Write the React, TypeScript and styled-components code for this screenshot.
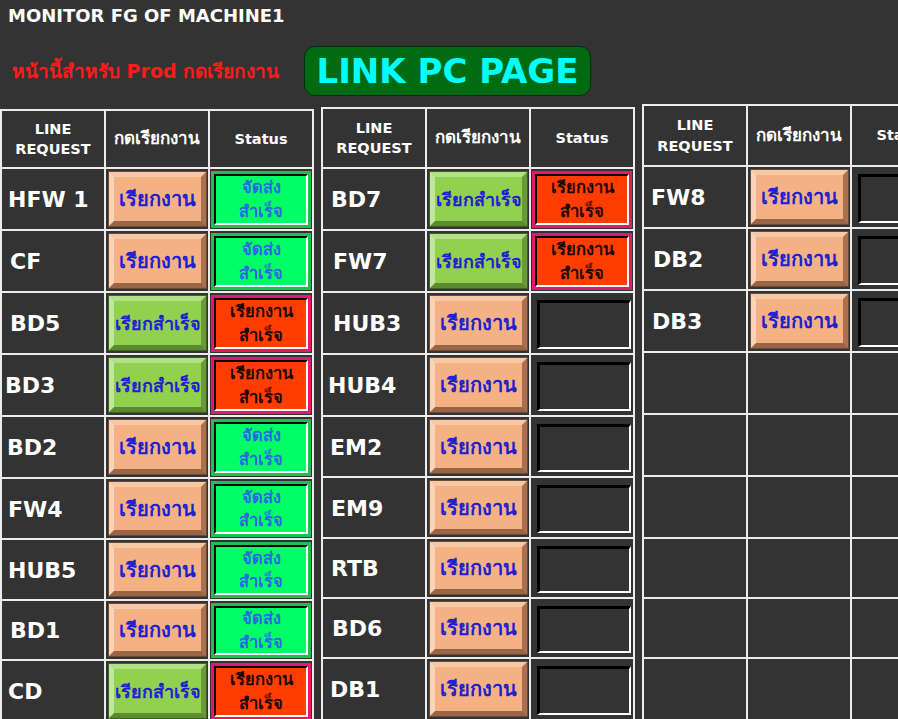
import React from "react";
import styled, { createGlobalStyle } from "styled-components";

const GlobalStyle = createGlobalStyle`
  html, body {
    margin: 0;
    padding: 0;
    background: #333333;
  }
  body {
    width: 898px;
    height: 719px;
    overflow: hidden;
    font-family: "DejaVu Sans", "Noto Sans", sans-serif;
  }
`;

type Req = "call" | "done";
type Stat = "sent" | "called" | "empty";

interface Row {
  line: string;
  indent: number;
  req?: Req;
  stat?: Stat;
}

const Page = styled.div`
  width: 898px;
  height: 719px;
  overflow: hidden;
  background: #333333;
`;

const Header = styled.header`
  height: 104px;
  display: flex;
  flex-direction: column;
`;

const Title = styled.h1`
  margin: 0;
  padding: 5px 0 0 8px;
  height: 30px;
  box-sizing: border-box;
  color: #ffffff;
  font-size: 18px;
  font-weight: bold;
`;

const NoticeRow = styled.div`
  display: flex;
  align-items: center;
  padding-left: 12px;
  margin-top: 16px;
`;

const Notice = styled.span`
  width: 292px;
  color: #ff1a1a;
  font-size: 19px;
  font-weight: bold;
`;

const LinkButton = styled.a`
  width: 285px;
  height: 48px;
  display: flex;
  align-items: center;
  justify-content: center;
  background: #006b10;
  border: 1px solid #0d2a0d;
  border-radius: 11px;
  color: #00ffff;
  font-size: 34px;
  font-weight: bold;
  text-decoration: none;
`;

const Sheets = styled.div`
  display: flex;
  align-items: flex-start;
  gap: 7px;
`;

const Sheet = styled.div<{ $top: number; $rows: string }>`
  flex: 0 0 auto;
  margin-top: ${(p) => p.$top}px;
  display: grid;
  grid-template-columns: 102px 102px 102px;
  grid-template-rows: ${(p) => p.$rows};
  grid-auto-rows: 60px;
  gap: 2px;
  padding: 2px;
  background: #ececec;
`;

const Cell = styled.div`
  background: #333333;
  min-width: 0;
  overflow: hidden;
`;

const HeadCell = styled(Cell)<{ $thai?: boolean }>`
  display: flex;
  align-items: center;
  justify-content: center;
  text-align: center;
  color: #ffffff;
  font-size: ${(p) => (p.$thai ? "17px" : "14.5px")};
  font-weight: bold;
  line-height: 1.4;
  white-space: nowrap;
`;

const LineCell = styled(Cell)<{ $indent: number }>`
  display: flex;
  align-items: center;
  padding-left: ${(p) => p.$indent}px;
  padding-top: 1px;
  color: #ffffff;
  font-size: 22px;
  font-weight: bold;
  white-space: nowrap;
`;

const ButtonCell = styled(Cell)`
  display: flex;
  padding: 2px 1px 2px 2px;
`;

const Bevel = styled.button<{ $kind: Req }>`
  flex: 1;
  margin: 0;
  padding: 0;
  display: flex;
  align-items: center;
  justify-content: center;
  box-sizing: border-box;
  font-family: inherit;
  font-weight: bold;
  color: #2020d0;
  white-space: nowrap;
  border-style: solid;
  border-width: 6px;
  outline: 1px solid ${(p) => (p.$kind === "call" ? "#6b4a33" : "#3f5f22")};
  outline-offset: -1px;
  font-size: ${(p) => (p.$kind === "call" ? "20px" : "18px")};
  background: ${(p) => (p.$kind === "call" ? "#f4b183" : "#92d050")};
  border-color: ${(p) =>
    p.$kind === "call"
      ? "#f7c8a6 #a97150 #9a6546 #f9d4b8"
      : "#b3df86 #6a9a38 #5c8a2e #c1e79c"};
`;

const StatusCell = styled(Cell)`
  display: flex;
  padding: 2px 1px 1px 1px;
`;

const StatusFrame = styled.div<{ $kind: Stat }>`
  flex: 1;
  display: flex;
  box-sizing: border-box;
  border: 3px solid ${(p) => (p.$kind === "sent" ? "#19c153" : "#e3196b")};
`;

const StatusFace = styled.div<{ $kind: Stat }>`
  flex: 1;
  display: flex;
  flex-direction: column;
  align-items: center;
  justify-content: center;
  border-style: solid;
  border-width: 2px;
  border-color: #000000 #ffffff #ffffff #000000;
  background: ${(p) => (p.$kind === "sent" ? "#00ff66" : "#ff3d00")};
  color: ${(p) => (p.$kind === "sent" ? "#2a66e6" : "#1c0600")};
  font-size: 16.5px;
  font-weight: bold;
  line-height: 1.4;
`;

const EmptySlot = styled.div`
  flex: 1;
  margin: 5px 1px 3px 5px;
  border-style: solid;
  border-width: 3px 2px 2px 3px;
  border-color: #000000 #ffffff #ffffff #000000;
  background: #333333;
`;

const left: Row[] = [
  { line: "HFW 1", indent: 6, req: "call", stat: "sent" },
  { line: "CF", indent: 8, req: "call", stat: "sent" },
  { line: "BD5", indent: 8, req: "done", stat: "called" },
  { line: "BD3", indent: 3, req: "done", stat: "called" },
  { line: "BD2", indent: 5, req: "call", stat: "sent" },
  { line: "FW4", indent: 6, req: "call", stat: "sent" },
  { line: "HUB5", indent: 6, req: "call", stat: "sent" },
  { line: "BD1", indent: 8, req: "call", stat: "sent" },
  { line: "CD", indent: 6, req: "done", stat: "called" },
];

const middle: Row[] = [
  { line: "BD7", indent: 8, req: "done", stat: "called" },
  { line: "FW7", indent: 10, req: "done", stat: "called" },
  { line: "HUB3", indent: 10, req: "call", stat: "empty" },
  { line: "HUB4", indent: 5, req: "call", stat: "empty" },
  { line: "EM2", indent: 7, req: "call", stat: "empty" },
  { line: "EM9", indent: 8, req: "call", stat: "empty" },
  { line: "RTB", indent: 8, req: "call", stat: "empty" },
  { line: "BD6", indent: 9, req: "call", stat: "empty" },
  { line: "DB1", indent: 7, req: "call", stat: "empty" },
];

const right: Row[] = [
  { line: "FW8", indent: 7, req: "call", stat: "empty" },
  { line: "DB2", indent: 9, req: "call", stat: "empty" },
  { line: "DB3", indent: 8, req: "call", stat: "empty" },
  ...Array.from({ length: 6 }, () => ({ line: "", indent: 0 })),
];

function Status({ kind }: { kind?: Stat }) {
  if (!kind) return <Cell />;
  if (kind === "empty")
    return (
      <StatusCell>
        <EmptySlot />
      </StatusCell>
    );
  return (
    <StatusCell>
      <StatusFrame $kind={kind}>
        <StatusFace $kind={kind}>
          {kind === "sent" ? (
            <>
              <span>จัดส่ง</span>
              <span>สำเร็จ</span>
            </>
          ) : (
            <>
              <span>เรียกงาน</span>
              <span>สำเร็จ</span>
            </>
          )}
        </StatusFace>
      </StatusFrame>
    </StatusCell>
  );
}

function LineTable({ rows, top, template }: { rows: Row[]; top: number; template: string }) {
  return (
    <Sheet $top={top} $rows={template}>
      <HeadCell>
        LINE
        <br />
        REQUEST
      </HeadCell>
      <HeadCell $thai>กดเรียกงาน</HeadCell>
      <HeadCell>Status</HeadCell>
      {rows.map((r, i) => (
        <React.Fragment key={i}>
          <LineCell $indent={r.indent}>{r.line}</LineCell>
          {r.req ? (
            <ButtonCell>
              <Bevel $kind={r.req}>{r.req === "call" ? "เรียกงาน" : "เรียกสำเร็จ"}</Bevel>
            </ButtonCell>
          ) : (
            <Cell />
          )}
          <Status kind={r.stat} />
        </React.Fragment>
      ))}
    </Sheet>
  );
}

export default function App() {
  return (
    <Page>
      <GlobalStyle />
      <Header>
        <Title>MONITOR FG OF MACHINE1</Title>
        <NoticeRow>
          <Notice>หน้านี้สำหรับ Prod กดเรียกงาน</Notice>
          <LinkButton href="#">LINK PC PAGE</LinkButton>
        </NoticeRow>
      </Header>
      <Sheets>
        <LineTable rows={left} top={5} template="56px repeat(5, 60px) 59px 59px 58px 60px" />
        <LineTable rows={middle} top={3} template="58px repeat(4, 60px) 59px 59px 58px 58px 60px" />
        <LineTable rows={right} top={0} template="59px repeat(6, 60px) 58px 58px 62px" />
      </Sheets>
    </Page>
  );
}
